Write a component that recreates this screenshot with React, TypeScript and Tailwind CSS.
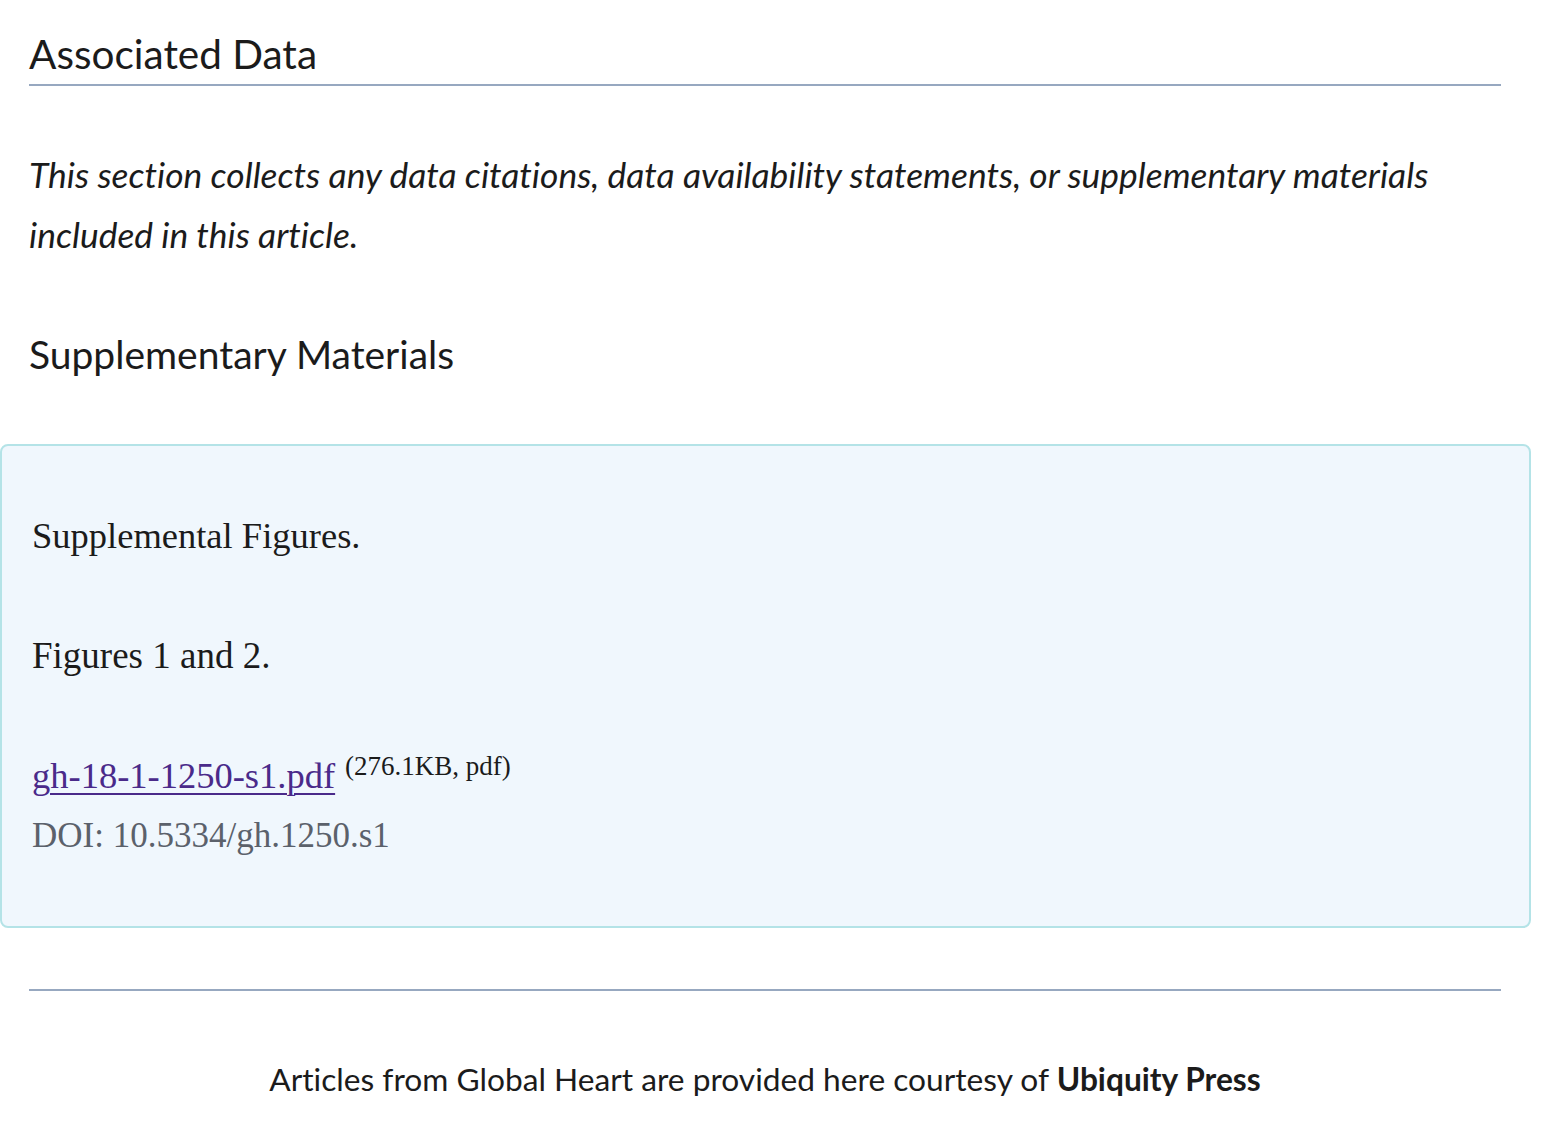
export default function App() {
  return (
    <div className="min-h-screen bg-white pl-[29px] pr-[51px] pt-[28px] text-[#1b1b1b] [font-variant-ligatures:none]">
      <h2 className="border-b-2 border-[#97a8c0] pb-[4px] font-['Lato',sans-serif] text-[40.5px] leading-[52px]">
        Associated Data
      </h2>

      <p className="mt-[59px] font-['Lato',sans-serif] text-[35.4px] italic leading-[60px]">
        This section collects any data citations, data availability statements, or supplementary materials included in
        this article.
      </p>

      <h3 className="mt-[64px] font-['Lato',sans-serif] text-[39px] leading-[50px]">Supplementary Materials</h3>

      <div className="mt-[65px] -ml-[29px] -mr-[30px] rounded-[8px] border-2 border-[#b4e3e7] bg-[#f0f7fd] pl-[30px] pr-[30px] pt-[66px] pb-[66px] font-['Liberation_Serif',serif] text-[#1b1b1b]">
        <p className="text-[36.5px] leading-[48px]">Supplemental Figures.</p>
        <p className="mt-[72px] text-[37px] leading-[48px]">Figures 1 and 2.</p>
        <p className="mt-[72px] text-[36.5px] leading-[48px]">
          <a href="#" className="text-[#4a2a8a] underline decoration-2 underline-offset-[5px]">
            gh-18-1-1250-s1.pdf
          </a>
          <sup className="ml-[10px] text-[27px]">(276.1KB, pdf)</sup>
        </p>
        <p className="mt-[12px] text-[35px] leading-[48px] text-[#5b616b]">DOI: 10.5334/gh.1250.s1</p>
      </div>

      <div className="mt-[61px] border-t-2 border-[#97a8c0]" />

      <p className="pt-[68px] pb-[40px] text-center font-['Lato',sans-serif] text-[31.7px] leading-[40px]">
        Articles from Global Heart are provided here courtesy of <b>Ubiquity Press</b>
      </p>
    </div>
  );
}
